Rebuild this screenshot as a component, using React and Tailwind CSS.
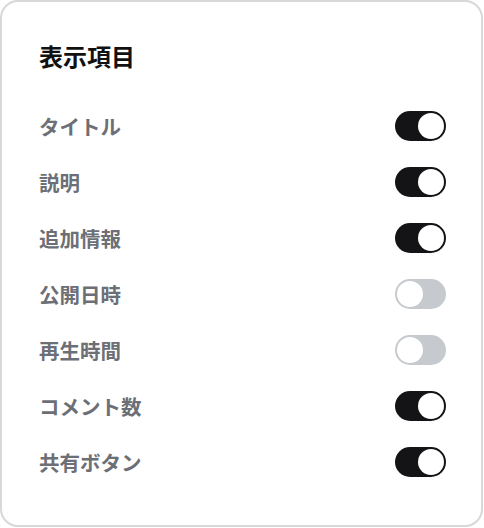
import React, { useState } from 'react';

const items = [
  { label: 'タイトル', on: true },
  { label: '説明', on: true },
  { label: '追加情報', on: true },
  { label: '公開日時', on: false },
  { label: '再生時間', on: false },
  { label: 'コメント数', on: true },
  { label: '共有ボタン', on: true },
];

const Toggle = ({ on, onClick }) => (
  <button
    onClick={onClick}
    className={`relative w-[51px] h-[30px] rounded-full p-[2px] flex items-center ${
      on ? 'bg-[#141416] justify-end' : 'bg-[#c6cace] justify-start'
    }`}
  >
    <span className="block w-[26px] h-[26px] rounded-full bg-white" />
  </button>
);

export default function App() {
  const [state, setState] = useState(items.map((i) => i.on));

  return (
    <div
      className="w-[484px] h-[528px] bg-white"
      style={{ fontFamily: '"Noto Sans CJK JP", "Noto Sans", sans-serif' }}
    >
      <div className="w-[483px] h-[527px] border-2 border-[#d8d8d8] rounded-[18px] pl-[37px] pr-[35px] pt-[39px]">
        <h2 className="text-[24px] leading-[30px] font-bold text-[#111111] mb-[27px]">表示項目</h2>
        <div className="flex flex-col">
          {items.map((item, i) => (
            <div key={item.label} className="h-[56px] flex items-center justify-between">
              <span className="text-[20.5px] font-semibold text-[#6c6f76]">{item.label}</span>
              <Toggle
                on={state[i]}
                onClick={() => setState((s) => s.map((v, j) => (j === i ? !v : v)))}
              />
            </div>
          ))}
        </div>
      </div>
    </div>
  );
}
